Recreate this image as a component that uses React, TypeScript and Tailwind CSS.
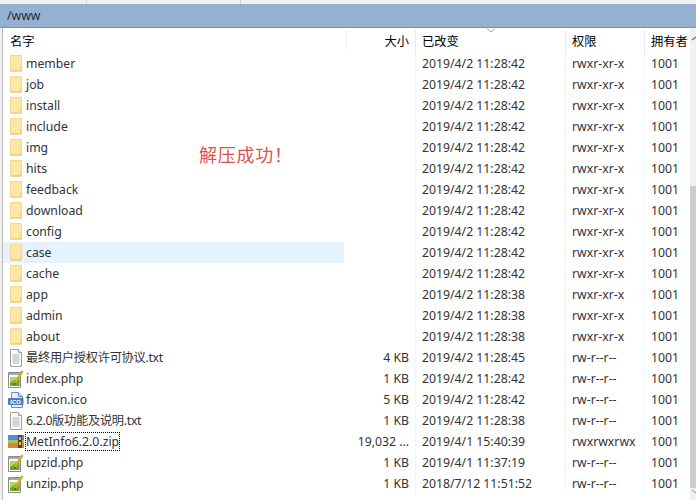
const FONT = "font-['Noto_Sans','Noto_Sans_CJK_SC',sans-serif]";

type Kind = 'folder' | 'txt' | 'php' | 'ico' | 'zip';

type Row = {
  name: string;
  kind: Kind;
  size: string;
  date: string;
  perm: string;
  active?: boolean;
  focused?: boolean;
};

const folder = (name: string, date: string, active = false): Row => ({
  name,
  kind: 'folder',
  size: '',
  date,
  perm: 'rwxr-xr-x',
  active,
});

const rows: Row[] = [
  folder('member', '2019/4/2 11:28:42'),
  folder('job', '2019/4/2 11:28:42'),
  folder('install', '2019/4/2 11:28:42'),
  folder('include', '2019/4/2 11:28:42'),
  folder('img', '2019/4/2 11:28:42'),
  folder('hits', '2019/4/2 11:28:42'),
  folder('feedback', '2019/4/2 11:28:42'),
  folder('download', '2019/4/2 11:28:42'),
  folder('config', '2019/4/2 11:28:42'),
  folder('case', '2019/4/2 11:28:42', true),
  folder('cache', '2019/4/2 11:28:42'),
  folder('app', '2019/4/2 11:28:38'),
  folder('admin', '2019/4/2 11:28:38'),
  folder('about', '2019/4/2 11:28:38'),
  { name: '最终用户授权许可协议.txt', kind: 'txt', size: '4 KB', date: '2019/4/2 11:28:45', perm: 'rw-r--r--' },
  { name: 'index.php', kind: 'php', size: '1 KB', date: '2019/4/2 11:28:42', perm: 'rw-r--r--' },
  { name: 'favicon.ico', kind: 'ico', size: '5 KB', date: '2019/4/2 11:28:42', perm: 'rw-r--r--' },
  { name: '6.2.0版功能及说明.txt', kind: 'txt', size: '1 KB', date: '2019/4/2 11:28:38', perm: 'rw-r--r--' },
  { name: 'MetInfo6.2.0.zip', kind: 'zip', size: '19,032 ...', date: '2019/4/1 15:40:39', perm: 'rwxrwxrwx', focused: true },
  { name: 'upzid.php', kind: 'php', size: '1 KB', date: '2019/4/1 11:37:19', perm: 'rw-r--r--' },
  { name: 'unzip.php', kind: 'php', size: '1 KB', date: '2018/7/12 11:51:52', perm: 'rw-r--r--' },
];

function FileIcon({ kind }: { kind: Kind }) {
  if (kind === 'folder') {
    return (
      <svg width="16" height="17" viewBox="0 0 16 17">
        <path d="M2.500.5h11v15.500h-11z" fill="#fde7a6" stroke="#f3d98f" />
        <path d="M12 11h2v5h-2z" fill="#f8d67c" />
        <path d="M2.500 16h11" stroke="#e9c46f" />
      </svg>
    );
  }
  if (kind === 'zip') {
    return (
      <svg width="16" height="15" viewBox="0 0 16 15">
        <rect x="0" y="1" width="16" height="5" fill="#4b8fdc" />
        <rect x="0" y="6" width="16" height="3" fill="#a7c35a" />
        <rect x="0" y="9" width="16" height="5" fill="#cf8a33" />
        <rect x="10" y="1" width="4" height="13" fill="#5b3f26" />
        <rect x="11" y="3" width="2" height="3" fill="#e8c45a" />
        <rect x="11" y="8" width="2" height="3" fill="#e8c45a" />
      </svg>
    );
  }
  if (kind === 'ico') {
    return (
      <svg width="16" height="16" viewBox="0 0 16 16">
        <path d="M3.500.5h7l4 4v11h-11z" fill="#e6eefa" stroke="#6d8fc4" />
        <path d="M10.500.5v4h4" fill="#c4d5ee" stroke="#6d8fc4" />
        <rect x="0" y="6" width="15.500" height="7" rx="1" fill="#4f79bd" />
        <text x="7.700" y="11.700" textAnchor="middle" fontSize="6" fontWeight="700" fill="#fff" fontFamily="Liberation Sans">ICO</text>
      </svg>
    );
  }
  if (kind === 'php') {
    return (
      <svg width="16" height="18" viewBox="0 0 16 18">
        <path d="M.5 2.500h12v15h-12z" fill="#fff" stroke="#8a8a8a" />
        <path d="M1 3h11v2H1z" fill="#a9a9a9" />
        <path d="M2 7h9.500v9H2z" fill="#b4d468" />
        <path d="M2 13l9.500-6v9H2z" fill="#6fa52d" />
        <path d="M7 13L14.500 1" stroke="#c7b21f" strokeWidth="2.500" />
        <path d="M7 13l-1 2.500 2.200-1.700z" fill="#333" />
      </svg>
    );
  }
  return (
    <svg width="16" height="18" viewBox="0 0 16 18">
      <path d="M2.500.5h8l3 3v14h-11z" fill="#fbfbfb" stroke="#a0a0a0" />
      <path d="M10.500.5v3h3" fill="#e6e6e6" stroke="#a0a0a0" />
      <path d="M4.500 6h7M4.500 8h7M4.500 10h7M4.500 12h7M4.500 14h7" stroke="#b0b0b0" />
    </svg>
  );
}

export default function App() {
  return (
    <div className={`relative w-[696px] h-[500px] overflow-hidden bg-white text-[12.25px] leading-[18px] text-[#333] ${FONT}`}>
      {/* toolbar edge left over at the top */}
      <div className="flex h-1 bg-[#f0f0f0]">
        <div className="w-[87px] border-r border-[#d4d4d4]" />
        <div className="w-[154px] border-r border-[#d4d4d4]" />
      </div>

      {/* path bar */}
      <div className="h-6 flex items-center pl-[7px] bg-[#95b1d1] border-b border-[#7f8fa3] text-[#1f2a3a]">/www</div>

      <div className="flex h-[472px]">
        <div className="w-[3px] bg-[#f0f0f0] border-r border-[#b9b9b9]" />

        <div className="flex-1 flex flex-col">
          {/* column headers */}
          <div className="relative flex h-[25px] items-center pt-[2px] text-black">
            <div className="w-[343px] pl-[7px]">名字</div>
            <div className="w-[69px] h-full flex items-center justify-end pr-[6px] border-l border-[#eef2f6]">大小</div>
            <div className="w-[150px] h-full flex items-center pl-[6px] border-l border-[#e5e9ee]">已改变</div>
            <div className="w-[79px] h-full flex items-center pl-[6px] border-l border-[#e5e9ee]">权限</div>
            <div className="w-[46px] h-full flex items-center pl-[6px] border-l border-[#e5e9ee] whitespace-nowrap">拥有者</div>
            <svg width="10" height="5" viewBox="0 0 10 5" className="absolute left-[483px] top-0">
              <path d="M1 .5l4 3.500 4-3.500" fill="none" stroke="#aaa" />
            </svg>
          </div>

          {/* file rows */}
          {rows.map((row) => (
            <div key={row.name} className="flex h-[21px] items-center">
              <div className={`w-[341px] h-full flex items-center pl-[5px] ${row.active ? 'bg-[#e5f3ff]' : ''}`}>
                <div className="w-[18px] shrink-0">
                  <FileIcon kind={row.kind} />
                </div>
                <span className={`leading-[17px] whitespace-nowrap ${row.kind === 'txt' ? 'tracking-[-0.3px]' : ''} ${row.focused ? 'outline-1 outline-dotted outline-black' : ''}`}>{row.name}</span>
              </div>
              <div className="w-[71px] h-full flex items-center justify-end pr-[6px] whitespace-nowrap">{row.size}</div>
              <div className="w-[150px] h-full flex items-center pl-[6px] border-l border-[#f1f5fa]">{row.date}</div>
              <div className="w-[79px] h-full flex items-center pl-[6px] border-l border-[#f1f5fa]">{row.perm}</div>
              <div className="w-[46px] h-full flex items-center pl-[6px] border-l border-[#f1f5fa]">1001</div>
            </div>
          ))}
        </div>

        {/* scrollbar */}
        <div className="w-[6px] flex flex-col bg-[#f0f0f0]">
          <svg width="6" height="24" viewBox="0 0 6 24" className="shrink-0">
            <path d="M2 12l4-3" fill="none" stroke="#666" strokeWidth="1.200" />
          </svg>
          <div className="h-[134px] shrink-0" />
          <div className="h-[302px] shrink-0 bg-[#cdcdcd]" />
          <svg width="6" height="8" viewBox="0 0 6 8" className="shrink-0">
            <path d="M2 2l4 3" fill="none" stroke="#888" />
          </svg>
        </div>
      </div>

      <div className="absolute left-[199px] top-[144px] text-[18px] leading-6 tracking-[0.75px] text-[#d9534f] font-['Liberation_Serif','Noto_Sans_CJK_SC',serif]">解压成功！</div>
    </div>
  );
}
